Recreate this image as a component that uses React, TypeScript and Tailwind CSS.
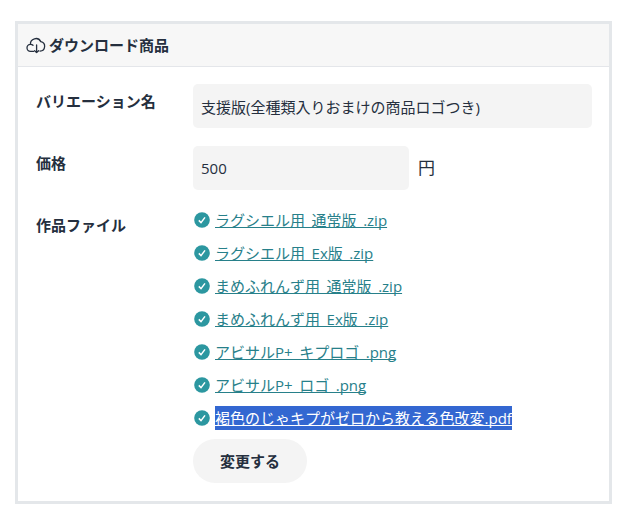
import { useId } from "react";

const files = [
  { name: "ラグシエル用_通常版_.zip" },
  { name: "ラグシエル用_Ex版_.zip" },
  { name: "まめふれんず用_通常版_.zip" },
  { name: "まめふれんず用_Ex版_.zip" },
  { name: "アビサルP+_キプロゴ_.png" },
  { name: "アビサルP+_ロゴ_.png" },
  { name: "褐色のじゃキプがゼロから教える色改変.pdf", selected: true },
];

export default function App() {
  const nameId = useId();
  const priceId = useId();

  return (
    <main className="pt-[21px] pr-[25px] pb-3 pl-[15px] font-['Open_Sans','Noto_Sans_CJK_JP',sans-serif] text-[15px] leading-6 text-[#252f3e]">
      <section className="border-3 border-[#e4e7ea] bg-white">
        <header className="flex h-[43px] items-center gap-[3px] border-b border-[#e4e6ea] bg-[#f7f7f7] px-2">
          <CloudIcon />
          <h2 className="font-bold">ダウンロード商品</h2>
        </header>
        <div className="grid grid-cols-[157px_1fr] gap-y-[18px] px-[17px] pt-[17px] pb-[18px] pl-[18px]">
          <label htmlFor={nameId} className="pt-[5px] font-bold">
            バリエーション名
          </label>
          <input
            id={nameId}
            defaultValue="支援版(全種類入りおまけの商品ロゴつき)"
            className="h-11 w-full rounded-[5px] bg-[#f4f4f4] px-2"
          />
          <label htmlFor={priceId} className="pt-[5px] font-bold">
            価格
          </label>
          <div className="flex items-center gap-[9px]">
            <input
              id={priceId}
              defaultValue="500"
              className="h-11 w-[216px] rounded-[5px] bg-[#f4f4f4] px-2"
            />
            <span className="text-[17px]">円</span>
          </div>
          <h3 className="pt-[5px] font-bold">作品ファイル</h3>
          <div>
            <ul className="space-y-[9px]">
              {files.map((file) => (
                <FileRow key={file.name} name={file.name} selected={file.selected} />
              ))}
            </ul>
            <button
              type="button"
              className="mt-[9px] h-11 rounded-full bg-[#f4f4f4] px-[27px] font-bold"
            >
              変更する
            </button>
          </div>
        </div>
      </section>
    </main>
  );
}

function FileRow({ name, selected }: { name: string; selected?: boolean }) {
  return (
    <li className="flex items-center gap-[5px] pl-px">
      <CheckIcon />
      <a
        href="#"
        className={
          selected
            ? "bg-[#3367d1] text-white underline underline-offset-1 [text-decoration-skip-ink:none]"
            : "text-[#27808a] underline underline-offset-1 [text-decoration-skip-ink:none]"
        }
      >
        {name}
      </a>
    </li>
  );
}

function CheckIcon() {
  return (
    <svg viewBox="0 0 16 16" className="h-4 w-4 shrink-0" aria-hidden="true">
      <circle cx="8" cy="8" r="7.8" fill="#2c97a0" />
      <path d="M4.8 8.4 7 10.6 11 5.4" fill="none" stroke="#fff" strokeWidth="1.5" />
    </svg>
  );
}

function CloudIcon() {
  return (
    <svg
      viewBox="0 0 20 20"
      className="h-5 w-5 shrink-0"
      fill="none"
      stroke="currentColor"
      strokeWidth="1.3"
      strokeLinecap="round"
      strokeLinejoin="round"
      aria-hidden="true"
    >
      <path d="M7.6 16.4H4.6A3.5 3.5 0 0 1 4.4 9.4 A5.5 5.5 0 0 1 14.8 6.6 A4.8 4.8 0 0 1 14 16.1" />
      <path d="M4.6 9.4a3.4 3.4 0 0 1 2.4 0.9" />
      <path d="M10.6 10v7.6M8.6 15.7l2 1.9 2-1.9" />
    </svg>
  );
}
